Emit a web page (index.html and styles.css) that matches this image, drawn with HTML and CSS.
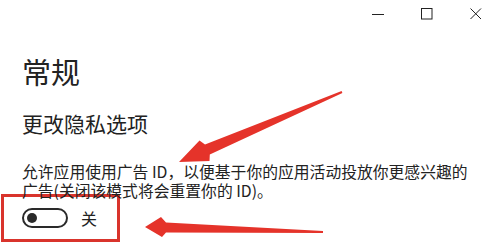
FILE: index.html
```html
<!DOCTYPE html>
<html lang="zh-CN">
<head>
<meta charset="utf-8">
<title>常规</title>
<link rel="stylesheet" href="styles.css">
</head>
<body>
<div class="page">
  <div class="titlebar">
    <svg class="ctl" viewBox="0 0 12 12" width="12" height="12"><path d="M0 6.5H12" stroke="#222" stroke-width="1"/></svg>
    <svg class="ctl" viewBox="0 0 12 12" width="12" height="12"><rect x="0.5" y="0.5" width="10.5" height="10.5" fill="none" stroke="#222" stroke-width="1"/></svg>
    <svg class="ctl" viewBox="0 0 12 12" width="12" height="12"><path d="M0.5 0.5L11 11M11 0.5L0.5 11" stroke="#222" stroke-width="1"/></svg>
  </div>
  <div class="content">
    <h1 class="title">常规</h1>
    <h2 class="subtitle">更改隐私选项</h2>
    <p class="desc">允许应用使用广告 ID，以便基于你的应用活动投放你更感兴趣的广告(关闭该模式将会重置你的 ID)。</p>
    <div class="highlight">
      <div class="toggle"><span class="knob"></span></div>
      <span class="state">关</span>
    </div>
  </div>
  <svg class="annot" viewBox="0 0 493 246" width="493" height="246">
    <polygon fill="#e5332a" points="179,162 209.5,161 209.8,154.5 342.4,92.9 341.6,91.1 205,144.5 199.5,140.5"/>
    <polygon fill="#e5332a" points="145,227 161,217 166,222.5 323,231 323,233 166,232.5 162,237"/>
  </svg>
</div>
</body>
</html>
```
FILE: styles.css
```css
html, body {
  margin: 0;
  padding: 0;
  background: #fff;
}
body {
  font-family: "Noto Sans CJK SC", "Noto Sans", sans-serif;
  color: #222;
}
.page {
  position: relative;
  width: 493px;
  height: 246px;
  overflow: hidden;
}
.titlebar {
  display: flex;
  justify-content: flex-end;
  align-items: center;
  gap: 37px;
  height: 28px;
  padding-right: 11px;
}
.ctl {
  display: block;
}
.content {
  padding-left: 22px;
}
.title {
  margin: 25px 0 0;
  font-size: 29px;
  font-weight: 400;
  line-height: 36px;
}
.subtitle {
  margin: 20px 0 0;
  font-size: 21px;
  font-weight: 400;
  line-height: 28px;
}
.desc {
  margin: 25px 0 0;
  width: 456px;
  font-size: 15.8px;
  line-height: 19px;
}
.highlight {
  box-sizing: border-box;
  display: flex;
  align-items: center;
  gap: 13px;
  width: 119px;
  height: 48px;
  margin: -6px 0 0 -21px;
  padding-left: 18px;
  border: 3px solid #d9342c;
}
.toggle {
  box-sizing: border-box;
  display: flex;
  align-items: center;
  width: 46px;
  height: 20px;
  padding-left: 3px;
  border: 2px solid #2a2a2a;
  border-radius: 10px;
}
.knob {
  width: 10px;
  height: 10px;
  border-radius: 50%;
  background: #2a2a2a;
}
.state {
  font-size: 16px;
  line-height: 20px;
}
.annot {
  position: absolute;
  left: 0;
  top: 0;
  pointer-events: none;
}
```
